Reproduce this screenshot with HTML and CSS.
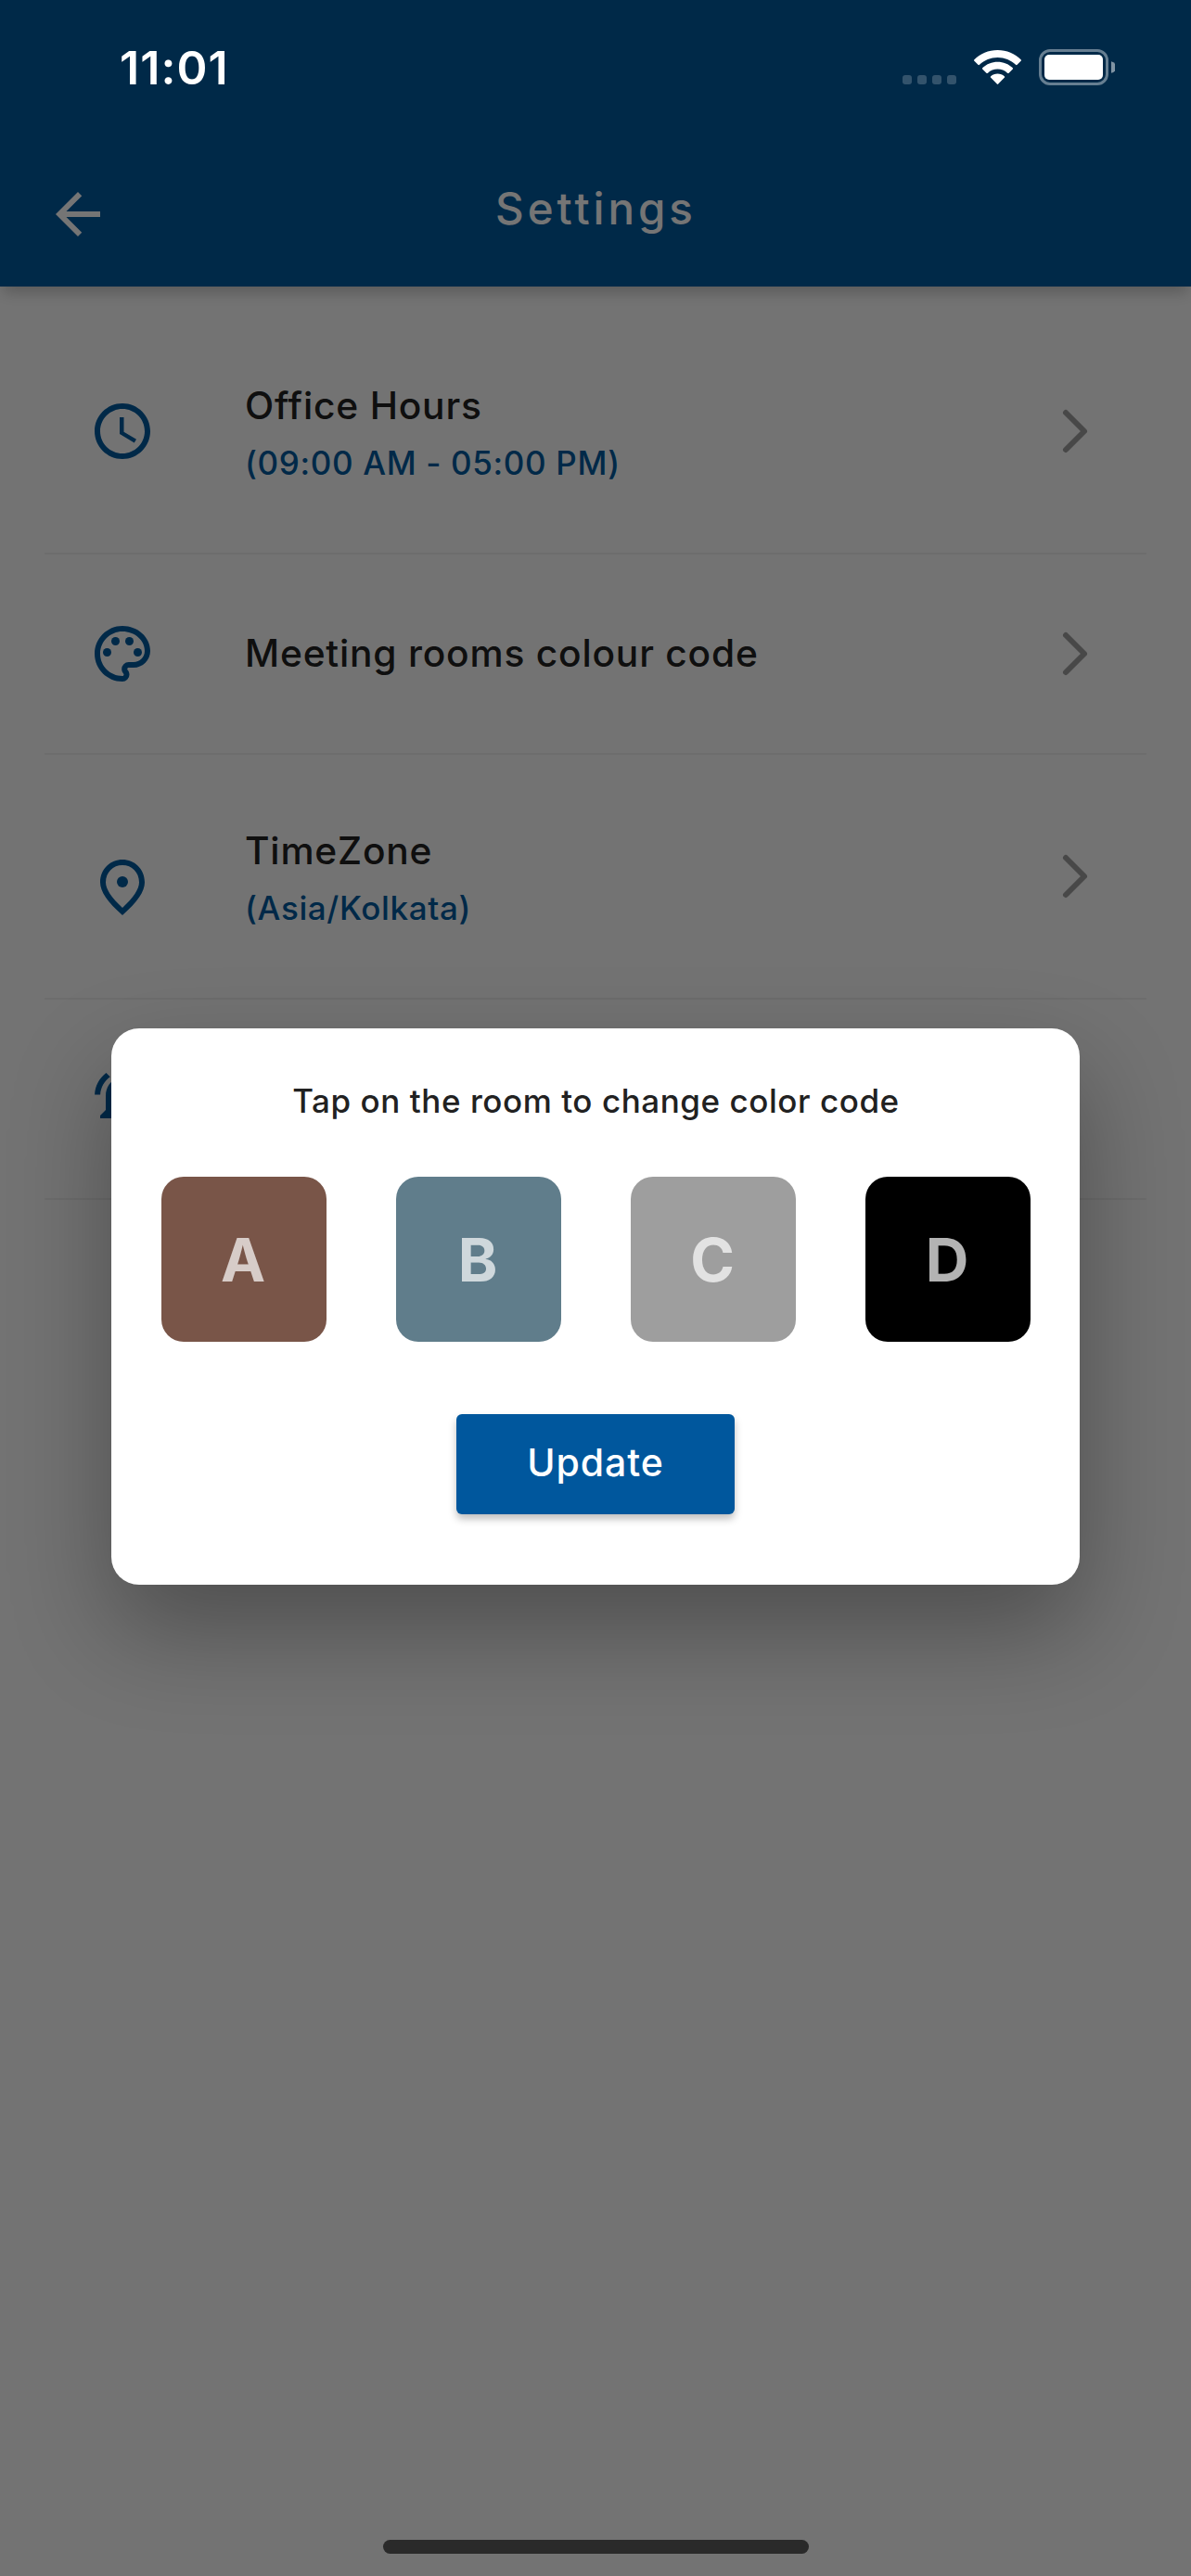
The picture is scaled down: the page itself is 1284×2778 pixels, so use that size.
FILE: index.html
```html
<!DOCTYPE html>
<html lang="en">
<head>
<meta charset="utf-8">
<title>Settings</title>
<link rel="stylesheet" href="styles.css">
</head>
<body>
<div class="screen">
  <header class="app-bar">
    <svg class="back" viewBox="0 0 24 24"><path d="M20 11H7.83l5.59-5.59L12 4l-8 8 8 8 1.41-1.41L7.83 13H20v-2z"/></svg>
    <h1 class="app-title">Settings</h1>
  </header>

  <main class="list">
    <div class="row row-tall">
      <svg class="icon" viewBox="0 0 24 24"><path d="M11.99 2C6.47 2 2 6.48 2 12s4.47 10 9.99 10C17.52 22 22 17.52 22 12S17.52 2 11.99 2zM12 20c-4.42 0-8-3.58-8-8s3.58-8 8-8 8 3.58 8 8-3.58 8-8 8zm.5-13H11v6l5.25 3.15.75-1.23-4.5-2.67z"/></svg>
      <div class="labels">
        <div class="label">Office Hours</div>
        <div class="sub">(09:00 AM - 05:00 PM)</div>
      </div>
      <svg class="chevron" viewBox="0 0 30 50"><path d="M5 5L25 25L5 45"/></svg>
    </div>
    <div class="row">
      <svg class="icon" viewBox="0 0 24 24"><path d="M12 22C6.49 22 2 17.51 2 12S6.49 2 12 2s10 4.04 10 9c0 3.31-2.69 6-6 6h-1.77c-.28 0-.5.22-.5.5 0 .12.05.23.13.33.41.47.64 1.06.64 1.67A2.5 2.5 0 0 1 12 22zm0-18c-4.41 0-8 3.59-8 8s3.59 8 8 8c.28 0 .5-.22.5-.5a.54.54 0 0 0-.14-.35c-.41-.46-.63-1.05-.63-1.65a2.5 2.5 0 0 1 2.5-2.5H16c2.21 0 4-1.79 4-4 0-3.86-3.59-7-8-7z"/><circle cx="6.5" cy="11.5" r="1.5"/><circle cx="9.5" cy="7.5" r="1.5"/><circle cx="14.5" cy="7.5" r="1.5"/><circle cx="17.5" cy="11.5" r="1.5"/></svg>
      <div class="labels">
        <div class="label label-single">Meeting rooms colour code</div>
      </div>
      <svg class="chevron" viewBox="0 0 30 50"><path d="M5 5L25 25L5 45"/></svg>
    </div>
    <div class="row row-tall">
      <svg class="icon icon-pin" viewBox="0 0 24 24"><path d="M12 2c4.2 0 8 3.22 8 8.2 0 3.32-2.67 7.25-8 11.8-5.33-4.55-8-8.48-8-11.8C4 5.22 7.8 2 12 2zm6 8.2C18 6.57 15.35 4 12 4s-6 2.57-6 6.2c0 2.34 1.95 5.44 6 9.14 4.05-3.7 6-6.8 6-9.14z"/><circle cx="12" cy="10" r="2"/></svg>
      <div class="labels">
        <div class="label">TimeZone</div>
        <div class="sub">(Asia/Kolkata)</div>
      </div>
      <svg class="chevron" viewBox="0 0 30 50"><path d="M5 5L25 25L5 45"/></svg>
    </div>
    <div class="row">
      <svg class="icon" viewBox="0 0 24 24"><path d="M7.58 4.08L6.15 2.65C3.75 4.48 2.17 7.3 2.03 10.5h2c.15-2.65 1.51-4.97 3.55-6.42zm12.39 6.42h2c-.15-3.2-1.73-6.02-4.12-7.85l-1.42 1.43c2.02 1.45 3.39 3.77 3.54 6.42zM18 11c0-3.07-1.64-5.64-4.5-6.32V4c0-.83-.67-1.5-1.5-1.5s-1.5.67-1.5 1.5v.68C7.63 5.36 6 7.92 6 11v5l-2 2v1h16v-1l-2-2v-5zm-6 11c.14 0 .27-.01.4-.04.65-.14 1.18-.58 1.44-1.18.1-.24.15-.5.15-.78h-4c.01 1.1.9 2 2.01 2z"/></svg>
    </div>
  </main>

  <div class="scrim">
    <section class="dialog">
      <p class="prompt">Tap on the room to change color code</p>
      <div class="rooms">
        <button class="room room-a">A</button>
        <button class="room room-b">B</button>
        <button class="room room-c">C</button>
        <button class="room room-d">D</button>
      </div>
      <button class="update">Update</button>
    </section>
  </div>

  <div class="status-bar">
    <span class="time">11:01</span>
    <span class="signal"><i></i><i></i><i></i><i></i></span>
    <svg class="wifi" viewBox="0 0 51 38"><path d="M25.5 0C35.3 0 44.3 3.8 50.6 10.2q.8.8 0 1.6l-4 4q-.8.7-1.6 0C39.8 10.8 33 7.9 25.5 7.9S11.2 10.8 6 15.8q-.8.7-1.6 0l-4-4q-.8-.8 0-1.6C6.7 3.8 15.7 0 25.5 0zM25.5 12.7C31.7 12.7 37.4 15.1 41.6 19.1q.8.8 0 1.6l-4 4q-.8.7-1.6 0C33.2 22.1 29.5 20.6 25.5 20.6S17.8 22.1 15 24.7q-.8.7-1.6 0l-4-4q-.8-.8 0-1.6C13.6 15.1 19.3 12.7 25.5 12.7zM25.5 25.5C28.3 25.5 30.9 26.5 32.8 28.2q.8.8 0 1.6L26.2 36.6q-.7.7-1.4 0L18.2 29.8q-.8-.8 0-1.6C20.1 26.5 22.7 25.5 25.5 25.5z"/></svg>
    <svg class="battery" viewBox="0 0 82 39"><rect class="battery-case" x="1.5" y="1.5" width="72" height="36" rx="10.5"/><rect class="battery-fill" x="6" y="6" width="63" height="27" rx="5"/><path class="battery-nub" d="M78 13.2a6.5 6.5 0 0 1 0 12.6z"/></svg>
  </div>
  <div class="home-indicator"></div>
</div>
</body>
</html>
```
FILE: styles.css
```css
* { box-sizing: border-box; }

body {
  margin: 0;
  font-family: Inter, "Liberation Sans", sans-serif;
}

h1, p { margin: 0; font-weight: 400; }

button {
  border: 0;
  padding: 0;
  font-family: inherit;
}

.screen {
  position: relative;
  width: 1284px;
  height: 2778px;
  overflow: hidden;
  background: #fafafa;
}

/* App bar */
.app-bar {
  display: grid;
  grid-template-columns: 120px 1fr 120px;
  align-items: center;
  height: 309px;
  padding-top: 141px;
  background: #00599e;
  box-shadow: 0 10px 14px -4px rgba(0, 0, 0, .18), 0 3px 20px rgba(0, 0, 0, .06);
}

.back {
  width: 72px;
  height: 72px;
  margin: 12px 0 0 48px;
  fill: #fff;
}

.app-title {
  color: #fff;
  font-size: 47.5px;
  font-weight: 500;
  line-height: 60px;
  letter-spacing: 3.95px;
  text-align: center;
  text-indent: 1px;
}

/* Settings list */
.list {
  padding: 25px 48px 0;
}

.row {
  display: flex;
  align-items: center;
  height: 216px;
  padding: 0 62px 0 48px;
  border-bottom: 2px solid #eee;
}

.row-tall { height: 264px; }

.icon {
  flex: none;
  width: 72px;
  height: 72px;
  fill: #00599e;
}

.icon-pin { margin-top: 24px; }

.labels {
  flex: 1;
  padding-left: 96px;
}

.label {
  color: #212121;
  font-size: 40.7px;
  font-weight: 500;
  line-height: 69px;
  letter-spacing: .8px;
}

.label-single { padding-bottom: 2px; }

.sub {
  padding-bottom: 2px;
  color: #00599e;
  font-size: 35px;
  font-weight: 500;
  line-height: 54px;
  letter-spacing: .65px;
}

.chevron {
  width: 30px;
  height: 50px;
  fill: none;
  stroke: #9e9e9e;
  stroke-width: 6;
  stroke-linecap: round;
  stroke-linejoin: round;
}

/* Colour dialog */
.scrim {
  position: absolute;
  inset: 0;
  display: flex;
  align-items: center;
  justify-content: center;
  padding: 141px 0 102px;
  background: rgba(0, 0, 0, .54);
}

.dialog {
  display: flex;
  flex-direction: column;
  align-items: center;
  width: 1044px;
  height: 600px;
  padding: 47px 54px 0;
  border-radius: 30px;
  background: #fff;
  box-shadow: 0 48px 108px rgba(0, 0, 0, .32);
}

.prompt {
  color: #212121;
  font-size: 35px;
  font-weight: 500;
  line-height: 63px;
  letter-spacing: .55px;
  text-indent: 1px;
}

.rooms {
  display: flex;
  justify-content: space-between;
  width: 937px;
  margin-top: 50px;
}

.room {
  width: 178px;
  height: 178px;
  padding: 2px 1px 0 0;
  border-radius: 24px;
  color: rgba(255, 255, 255, .7);
  font-size: 64.5px;
  font-weight: 700;
  line-height: 176px;
}

.room-a { background: #795548; }
.room-b { background: #607d8b; }
.room-c { background: #9e9e9e; }
.room-d { background: #000; }

.update {
  width: 300px;
  height: 108px;
  margin-top: 78px;
  padding-bottom: 4px;
  border-radius: 6px;
  background: #00579d;
  box-shadow: 0 5px 8px rgba(0, 0, 0, .26);
  color: #fff;
  font-size: 41px;
  font-weight: 500;
  line-height: 104px;
  letter-spacing: .9px;
}

/* System overlays */
.status-bar {
  position: absolute;
  inset: 0 0 auto;
  display: flex;
  align-items: flex-start;
  height: 141px;
  padding: 53px 82px 0 129px;
}

.time {
  margin-right: auto;
  color: #fff;
  font-size: 50px;
  font-weight: 600;
  line-height: 40px;
  letter-spacing: 1.1px;
}

.signal {
  display: flex;
  gap: 6px;
  margin: 28px 19px 0 0;
}

.signal i {
  width: 10px;
  height: 10px;
  border-radius: 3px;
  background: rgba(255, 255, 255, .2);
}

.wifi {
  width: 51px;
  height: 38px;
  margin: 1px 19px 0 0;
  fill: #fff;
}

.battery { width: 82px; height: 39px; }

.battery-case {
  fill: none;
  stroke: rgba(255, 255, 255, .4);
  stroke-width: 3;
}

.battery-fill { fill: #fff; }
.battery-nub { fill: rgba(255, 255, 255, .5); }

.home-indicator {
  position: absolute;
  bottom: 24px;
  left: 413px;
  width: 459px;
  height: 15px;
  border-radius: 8px;
  background: #2a2a2a;
}
```
